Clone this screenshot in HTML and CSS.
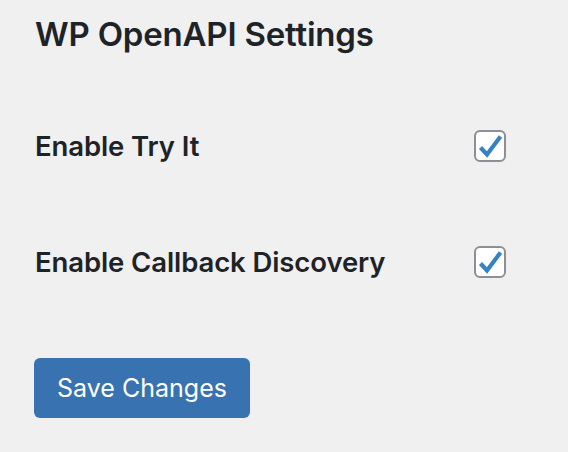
FILE: index.html
```html
<!DOCTYPE html>
<html>
<head>
<meta charset="utf-8">
<link rel="stylesheet" href="styles.css">
</head>
<body>
<div class="wrap">
  <h1 class="title">WP OpenAPI Settings</h1>
  <form class="form">
    <div class="row">
      <label class="label" for="tryit">Enable Try It</label>
      <span class="box" id="tryit"><svg viewBox="0 0 28 28" width="28" height="28"><path d="M4.5 15.5l6.5 7L24.5 4.5" fill="none" stroke="#3582c4" stroke-width="4.2" stroke-linejoin="miter"/></svg></span>
    </div>
    <div class="row">
      <label class="label" for="cb">Enable Callback Discovery</label>
      <span class="box" id="cb"><svg viewBox="0 0 28 28" width="28" height="28"><path d="M4.5 15.5l6.5 7L24.5 4.5" fill="none" stroke="#3582c4" stroke-width="4.2" stroke-linejoin="miter"/></svg></span>
    </div>
    <div class="actions">
      <button type="button" class="btn">Save Changes</button>
    </div>
  </form>
</div>
</body>
</html>
```
FILE: styles.css
```css
html, body { margin: 0; padding: 0; }
body {
  background: #f0f0f1;
  color: #1d2327;
  font-family: Inter, "Noto Sans", sans-serif;
  width: 568px;
  height: 452px;
  overflow: hidden;
}
.wrap { padding: 12px 0 0 35px; }
.title {
  margin: 0;
  font-size: 33px;
  font-weight: 600;
  line-height: 44px;
  letter-spacing: -0.2px;
}
.form { display: flex; flex-direction: column; }
.row {
  display: flex;
  align-items: center;
  justify-content: space-between;
  width: 471px;
  height: 40px;
  margin-top: 70px;
}
.row + .row { margin-top: 76px; }
.label {
  font-size: 27.5px;
  font-weight: 600;
  letter-spacing: -0.1px;
}
.box {
  box-sizing: border-box;
  width: 32px;
  height: 32px;
  border: 2px solid #8c8f94;
  border-radius: 6px;
  background: #fff;
  display: flex;
  align-items: center;
  justify-content: center;
  overflow: hidden;
}
.box svg { display: block; }
.actions { margin-top: 76px; }
.btn {
  width: 216px;
  height: 60px;
  margin-left: -1px;
  border: 0;
  border-radius: 6px;
  background: #3872b0;
  color: #fff;
  font-family: Inter, "Noto Sans", sans-serif;
  font-size: 25px;
  font-weight: 400;
  padding: 0;
}
```
